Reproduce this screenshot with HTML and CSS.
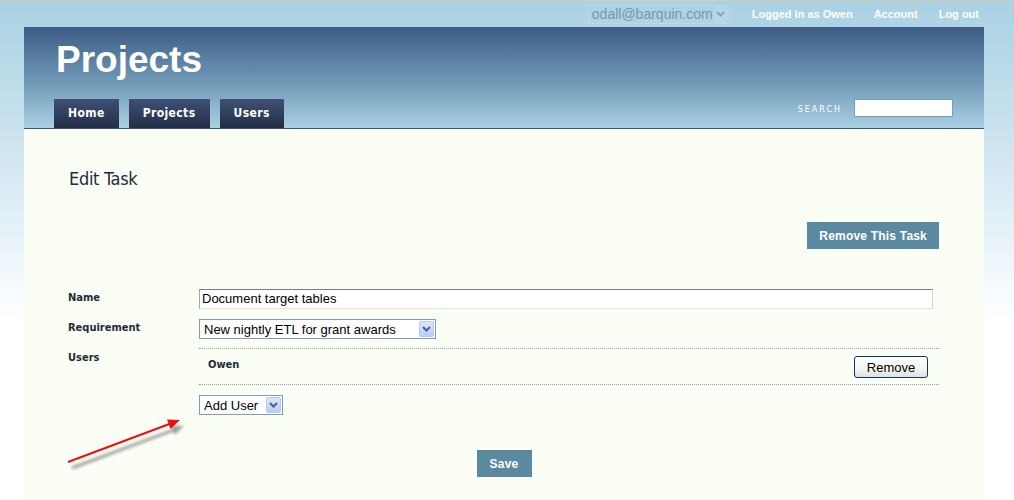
FILE: index.html
```html
<!DOCTYPE html>
<html lang="en">
<head>
<meta charset="utf-8">
<title>Edit Task</title>
<link rel="stylesheet" href="styles.css">
</head>
<body>
<div class="topbar">
  <div class="select select-account">
    <span class="select-value">odall@barquin.com</span>
    <span class="select-btn"><svg width="9" height="6" viewBox="0 0 9 6"><path d="M1 1 L4.5 4.5 L8 1" fill="none" stroke="#8aa7bc" stroke-width="2"/></svg></span>
  </div>
  <a class="toplink" href="#">Logged in as Owen</a>
  <a class="toplink" href="#">Account</a>
  <a class="toplink" href="#">Log out</a>
</div>

<div class="page">
  <header class="masthead">
    <h1 class="site-title">Projects</h1>
    <div class="navrow">
      <nav class="tabs">
        <a class="tab" href="#">Home</a>
        <a class="tab" href="#">Projects</a>
        <a class="tab" href="#">Users</a>
      </nav>
      <div class="search">
        <span class="search-label">SEARCH</span>
        <span class="search-input"></span>
      </div>
    </div>
  </header>

  <main class="content">
    <h2 class="page-title">Edit Task</h2>
    <div class="actions">
      <button class="btn" type="button">Remove This Task</button>
    </div>

    <div class="task-form">
      <div class="label label-top">Name</div>
      <div class="field">
        <div class="text-input">Document target tables</div>
      </div>

      <div class="label label-top">Requirement</div>
      <div class="field">
        <div class="select select-req">
          <span class="select-value">New nightly ETL for grant awards</span>
          <span class="select-btn"><svg width="9" height="6" viewBox="0 0 9 6"><path d="M1 1 L4.5 4.5 L8 1" fill="none" stroke="#4d6185" stroke-width="2"/></svg></span>
        </div>
      </div>

      <div class="label label-users">Users</div>
      <div class="field field-users">
        <div class="user-list">
          <div class="user-row">
            <span class="user-name">Owen</span>
            <button class="xp-btn" type="button">Remove</button>
          </div>
        </div>
        <div class="select select-add">
          <span class="select-value">Add User</span>
          <span class="select-btn"><svg width="9" height="6" viewBox="0 0 9 6"><path d="M1 1 L4.5 4.5 L8 1" fill="none" stroke="#4d6185" stroke-width="2"/></svg></span>
        </div>
      </div>
    </div>

    <div class="save-row">
      <button class="btn btn-save" type="button">Save</button>
    </div>
  </main>
</div>

<svg class="annotation" width="200" height="480" viewBox="0 0 200 480">
  <defs>
    <filter id="blur" x="-20%" y="-50%" width="140%" height="200%">
      <feGaussianBlur stdDeviation="1.6"/>
    </filter>
  </defs>
  <g filter="url(#blur)" transform="translate(4,6)" opacity="0.55">
    <line x1="68" y1="462" x2="170" y2="423.8" stroke="#555" stroke-width="3"/>
    <polygon points="180,420 167,419.5 170.5,428.9" fill="#555"/>
  </g>
  <line x1="68" y1="462" x2="170" y2="423.8" stroke="#f20d0d" stroke-width="2"/>
  <polygon points="180,420 167,419.5 170.5,428.9" fill="#f20d0d"/>
</svg>
</body>
</html>
```

FILE: styles.css
```css
html, body {
  margin: 0;
  padding: 0;
}

body {
  height: 500px;
  background: #ffffff linear-gradient(to bottom, #a9d1e3 0px, #cfe5f0 150px, #f6fbfd 290px, #ffffff 320px) no-repeat;
  font-family: "Liberation Sans", Arial, sans-serif;
  color: #1d2f3c;
  position: relative;
  overflow: hidden;
}

/* top bar */
.topbar {
  height: 26px;
  border-top: 1px solid #d7cdb2;
  display: flex;
  align-items: center;
  justify-content: flex-end;
  gap: 21px;
  padding-right: 35px;
}

.toplink {
  color: #ffffff;
  font-weight: bold;
  font-size: 11px;
  text-decoration: none;
}

/* select-like control */
.select {
  display: flex;
  align-items: center;
  justify-content: space-between;
  box-sizing: border-box;
  height: 20px;
  border: 1px solid #7f9db9;
  background: #ffffff;
  padding: 0 1px 0 4px;
  font-size: 13px;
  color: #000;
}

.select-btn {
  display: flex;
  align-items: center;
  justify-content: center;
  width: 15px;
  height: 16px;
  box-sizing: border-box;
  border: 1px solid #b6c9f1;
  border-radius: 2px;
  background: linear-gradient(to bottom, #dbe6fe, #b9cdf6);
}

.select-account {
  width: 142px;
  height: 19px;
  margin-right: 1px;
  border-color: #bcd8e6;
  background: transparent;
  color: #7b97a8;
  font-size: 14px;
  padding-left: 3px;
}

.select-account .select-btn {
  border-color: #b9d6e8;
  background: #b6d5e8;
  height: 15px;
}

/* page container */
.page {
  width: 960px;
  margin: 0 0 0 24px;
}

.masthead {
  height: 101px;
  border-bottom: 1px solid #3a5668;
  background: linear-gradient(to bottom, #3c5c86 0%, #7199b7 55%, #a9d0e4 100%);
  display: flex;
  flex-direction: column;
}

.site-title {
  margin: 14px 0 0 32px;
  height: 37px;
  line-height: 37px;
  font-family: "Liberation Sans", Arial, sans-serif;
  font-size: 37px;
  font-weight: bold;
  color: #ffffff;
  letter-spacing: 0;
}

.navrow {
  margin-top: auto;
  display: flex;
  justify-content: space-between;
  align-items: flex-start;
  padding: 0 31px 0 30px;
}

.tabs {
  display: flex;
  gap: 10px;
}

.tab {
  display: block;
  height: 29px;
  line-height: 29px;
  padding: 0 14px;
  background: linear-gradient(to bottom, #3e5075, #232e45);
  color: #ffffff;
  font-family: "DejaVu Sans Condensed", "DejaVu Sans", sans-serif;
  font-weight: bold;
  font-size: 12px;
  letter-spacing: 0.4px;
  text-decoration: none;
}

.search {
  display: flex;
  align-items: center;
  gap: 12px;
}

.search-label {
  font-family: "DejaVu Sans", sans-serif;
  font-size: 8px;
  letter-spacing: 2px;
  color: #ffffff;
  padding-top: 3px;
}

.search-input {
  display: block;
  width: 99px;
  height: 18px;
  box-sizing: border-box;
  background: #ffffff;
  border: 1px solid #7d9bb8;
}

/* content */
.content {
  background: #fbfef5;
  padding: 39px 45px 30px;
}

.page-title {
  margin: 0;
  font-family: "DejaVu Sans Condensed", "DejaVu Sans", sans-serif;
  font-weight: normal;
  font-size: 18px;
  line-height: 22px;
  letter-spacing: -0.3px;
  color: #1b2f3b;
}

.actions {
  display: flex;
  justify-content: flex-end;
  margin-top: 32px;
}

.btn {
  height: 27px;
  padding: 0 12px;
  border: none;
  background: #5b8aa0;
  color: #ffffff;
  font-family: "Liberation Sans", Arial, sans-serif;
  font-weight: bold;
  font-size: 12px;
  letter-spacing: 0.2px;
  cursor: pointer;
}

.task-form {
  margin-top: 40px;
  display: grid;
  grid-template-columns: 130px 1fr;
  row-gap: 10px;
}

.label {
  font-family: "DejaVu Sans Condensed", "DejaVu Sans", sans-serif;
  font-weight: bold;
  font-size: 11px;
  line-height: 13px;
  color: #1d2b38;
  margin-left: -1px;
}

.label-top {
  padding-top: 2px;
}

.label-users {
  padding-top: 3px;
  margin-top: -1px;
}

.field-users {
  margin-top: -1px;
}

.text-input {
  width: 734px;
  height: 20px;
  box-sizing: border-box;
  border: 1px solid;
  border-color: #7a7a7a #d2d2d2 #e2e2e2 #a5a5a5;
  background: #ffffff;
  font-size: 13px;
  line-height: 18px;
  padding-left: 2px;
  color: #000;
}

.select-req {
  width: 237px;
}

.select-add {
  width: 84px;
  margin-top: 10px;
}

.user-list {
  border-top: 1px dotted #9a9a9a;
  border-bottom: 1px dotted #9a9a9a;
}

.user-row {
  display: flex;
  align-items: flex-start;
  justify-content: space-between;
  padding: 7px 11px 6px 9px;
}

.user-name {
  font-family: "DejaVu Sans Condensed", "DejaVu Sans", sans-serif;
  font-weight: bold;
  font-size: 11px;
  line-height: 13px;
  padding-top: 2px;
  color: #1d2b38;
}

.xp-btn {
  width: 74px;
  height: 22px;
  border: 1px solid #003c74;
  border-radius: 3px;
  background: linear-gradient(to bottom, #ffffff 0%, #f4f4f0 60%, #e2dfd6 100%);
  font-family: "Liberation Sans", Arial, sans-serif;
  font-size: 13px;
  color: #000;
  padding: 0;
}

.save-row {
  display: flex;
  justify-content: center;
  margin-top: 35px;
}

.btn-save {
  width: 55px;
  padding: 0;
}

/* annotation overlay */
.annotation {
  position: absolute;
  left: 0;
  top: 0;
  pointer-events: none;
}
```
